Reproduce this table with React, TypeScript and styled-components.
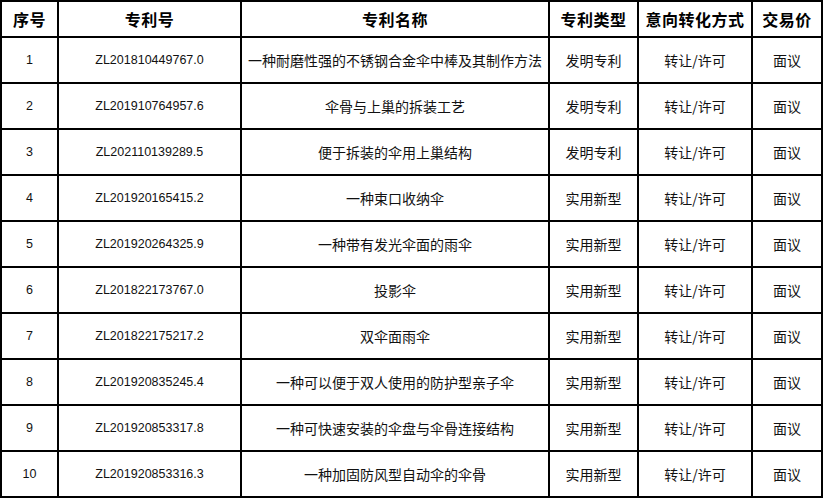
import { Fragment } from 'react';
import styled, { createGlobalStyle } from 'styled-components';

const GlobalStyle = createGlobalStyle`
  html, body {
    margin: 0;
    padding: 0;
    background: #ffffff;
  }
  body {
    font-family: "Noto Sans CJK SC", "Liberation Sans", sans-serif;
    color: #000;
  }
`;

const Table = styled.div`
  display: grid;
  grid-template-columns: 55px 181px 306px 87px 112px 68px;
  grid-template-rows: 34px repeat(10, 44px);
  gap: 2px;
  padding: 2px;
  background: #000;
  width: max-content;
`;

const HeadCell = styled.div`
  background: #fff;
  display: flex;
  align-items: center;
  justify-content: center;
  font-family: "Noto Sans CJK SC", sans-serif;
  font-weight: 700;
  font-size: 16px;
  letter-spacing: 0.5px;
  white-space: nowrap;
`;

const Cell = styled.div<{ $latin?: boolean }>`
  background: #fff;
  display: flex;
  align-items: center;
  justify-content: center;
  white-space: nowrap;
  color: #111;
  font-family: ${(p) =>
    p.$latin ? '"Liberation Sans", Arial, sans-serif' : '"Noto Sans CJK SC", sans-serif'};
  font-size: ${(p) => (p.$latin ? '12.5px' : '14px')};
`;

const headers = ['序号', '专利号', '专利名称', '专利类型', '意向转化方式', '交易价'];

const rows = [
  ['ZL201810449767.0', '一种耐磨性强的不锈钢合金伞中棒及其制作方法', '发明专利'],
  ['ZL201910764957.6', '伞骨与上巢的拆装工艺', '发明专利'],
  ['ZL202110139289.5', '便于拆装的伞用上巢结构', '发明专利'],
  ['ZL201920165415.2', '一种束口收纳伞', '实用新型'],
  ['ZL201920264325.9', '一种带有发光伞面的雨伞', '实用新型'],
  ['ZL201822173767.0', '投影伞', '实用新型'],
  ['ZL201822175217.2', '双伞面雨伞', '实用新型'],
  ['ZL201920835245.4', '一种可以便于双人使用的防护型亲子伞', '实用新型'],
  ['ZL201920853317.8', '一种可快速安装的伞盘与伞骨连接结构', '实用新型'],
  ['ZL201920853316.3', '一种加固防风型自动伞的伞骨', '实用新型'],
];

export default function App() {
  return (
    <>
      <GlobalStyle />
      <Table>
        {headers.map((h) => (
          <HeadCell key={h}>{h}</HeadCell>
        ))}
        {rows.map(([no, name, type], i) => (
          <Fragment key={no}>
            <Cell $latin>{i + 1}</Cell>
            <Cell $latin>{no}</Cell>
            <Cell>{name}</Cell>
            <Cell>{type}</Cell>
            <Cell>转让/许可</Cell>
            <Cell>面议</Cell>
          </Fragment>
        ))}
      </Table>
    </>
  );
}
